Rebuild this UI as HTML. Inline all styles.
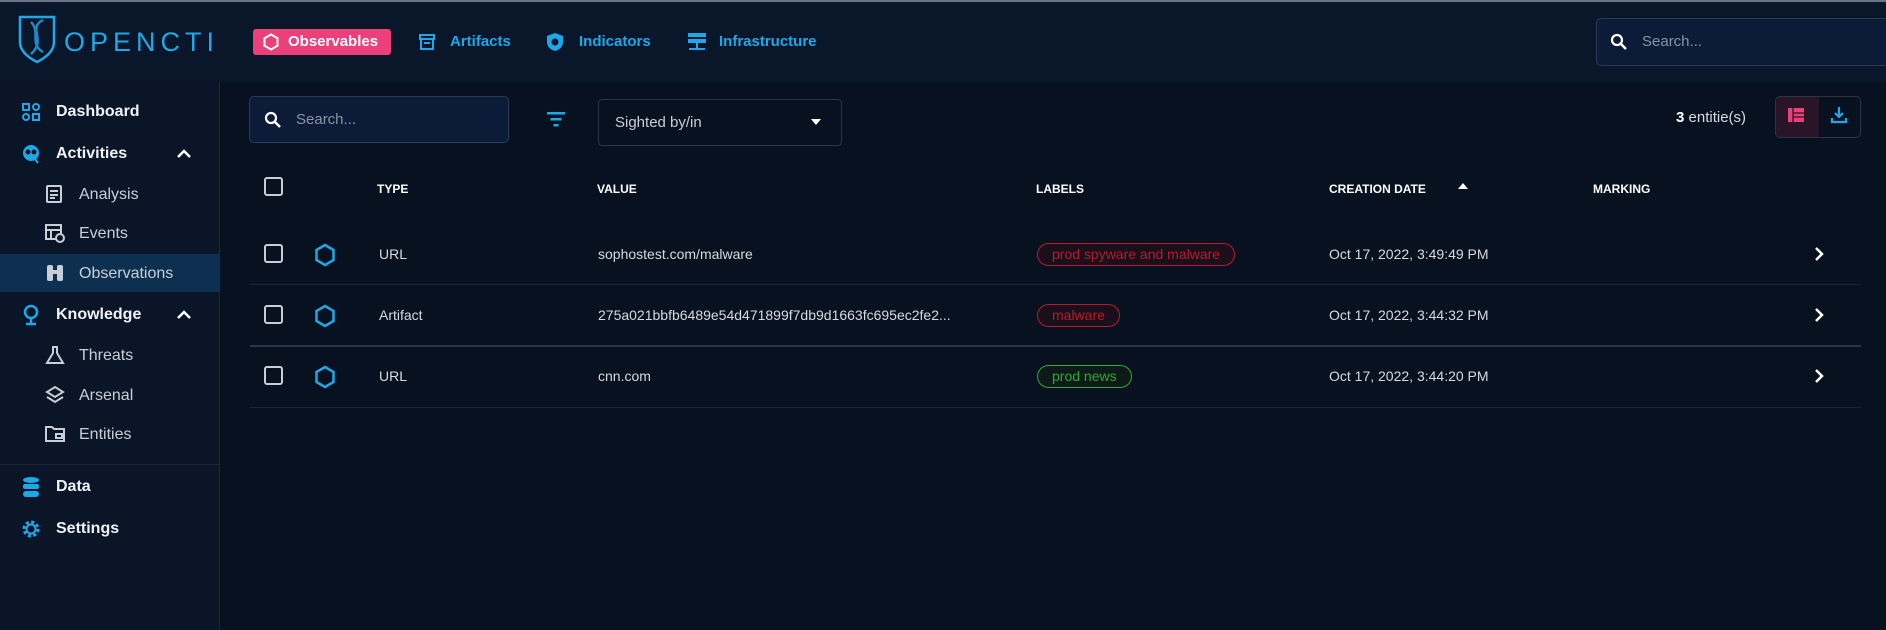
<!DOCTYPE html>
<html><head><meta charset="utf-8"><style>
*{margin:0;padding:0;box-sizing:border-box}
body{width:1886px;height:630px;overflow:hidden;background:#08111f;font-family:"Liberation Sans",sans-serif;color:#fff;position:relative}
.a{position:absolute}
.top{left:0;top:0;width:1886px;height:82px;background:#0a172b;border-top:2px solid #6b7588}
.side{left:0;top:82px;width:220px;height:548px;background:#0a1628;border-right:1px solid #1c2638}
.nav{color:#1ea8e8;font-weight:bold;font-size:15px;top:33px;height:18px;line-height:18px}
.si{left:56px;font-weight:bold;font-size:16px;color:#f0f2f5}
.sub{left:79px;font-size:16px;color:#c9ced6}
.hd{font-size:12px;font-weight:bold;top:182px;color:#fff}
.cb{left:264px;width:19px;height:19px;border:2.5px solid #c9ced6;border-radius:3px}
.cell{font-size:14px;color:#d6dae0}
.sep{left:250px;width:1611px;height:1px;background:#1c2638}
.chip{left:1037px;height:23px;border:1.5px solid;border-radius:12px;font-size:14px;line-height:20px;padding:0 14px}
</style></head><body>
<div class="a top"></div>
<svg class="a" style="left:17px;top:14px" width="40" height="50" viewBox="0 0 40 50"><path d="M3 3 H37 V28 C37 38 28 44 20 48 C12 44 3 38 3 28 Z" fill="none" stroke="#1ea8e8" stroke-width="2.5"/><path d="M26 6 C10 14 30 26 14 40 M14 8 C24 18 12 30 26 38" fill="none" stroke="#1e88c8" stroke-width="2.5"/></svg>
<div class="a" style="left:64px;top:27px;font-size:27px;letter-spacing:5px;color:#1ea8e8">OPENCTI</div>
<div class="a" style="left:253px;top:29px;width:138px;height:26px;background:#ec407a;border-radius:3px"></div>
<svg class="a" style="left:262px;top:33px" width="18" height="18" viewBox="0 0 18 18"><path d="M9 1.5 L15.5 5.2 V12.8 L9 16.5 L2.5 12.8 V5.2 Z" fill="none" stroke="#fff" stroke-width="2"/></svg>
<div class="a nav" style="left:288px;color:#fff;top:33px">Observables</div>
<svg class="a" style="left:418px;top:33px" width="18" height="18" viewBox="0 0 18 18"><rect x="2" y="2" width="14" height="4" fill="none" stroke="#1ea8e8" stroke-width="2"/><rect x="3" y="6" width="12" height="10" fill="none" stroke="#1ea8e8" stroke-width="2"/><rect x="6" y="9" width="6" height="2" fill="#1ea8e8"/></svg>
<div class="a nav" style="left:450px">Artifacts</div>
<svg class="a" style="left:546px;top:32px" width="18" height="20" viewBox="0 0 18 20"><path d="M9 1 L17 4 V10 C17 15 13 18 9 19 C5 18 1 15 1 10 V4 Z" fill="#1ea8e8"/><circle cx="9" cy="10" r="3.5" fill="#0a172b"/></svg>
<div class="a nav" style="left:579px">Indicators</div>
<svg class="a" style="left:687px;top:32px" width="20" height="20" viewBox="0 0 20 20"><rect x="1" y="1" width="18" height="4" fill="#1ea8e8"/><rect x="1" y="7" width="18" height="4" fill="#1ea8e8"/><rect x="9" y="11" width="2" height="5" fill="#1ea8e8"/><rect x="2" y="16" width="16" height="2" fill="#1ea8e8"/></svg>
<div class="a nav" style="left:719px">Infrastructure</div>
<div class="a" style="left:1596px;top:18px;width:300px;height:48px;background:#0c1c38;border:1px solid #2a3a55;border-radius:5px"></div>
<svg class="a" style="left:1610px;top:33px" width="18" height="18" viewBox="0 0 18 18"><circle cx="7" cy="7" r="5" fill="none" stroke="#fff" stroke-width="2.2"/><path d="M11 11 L16 16" stroke="#fff" stroke-width="2.5"/></svg>
<div class="a" style="left:1642px;top:33px;font-size:15px;color:#8a93a3">Search...</div>

<div class="a side"></div>
<div class="a" style="left:0;top:254px;width:220px;height:38px;background:#0d3050"></div>
<div class="a" style="left:0;top:464px;width:220px;height:1px;background:#1c2638"></div>
<svg class="a" style="left:22px;top:103px" width="18" height="18" viewBox="0 0 18 18" fill="none" stroke="#1ea8e8" stroke-width="2"><rect x="1" y="1" width="6" height="6"/><rect x="11" y="1" width="6" height="6" rx="3"/><rect x="1" y="11" width="6" height="6" rx="3"/><rect x="11" y="11" width="6" height="6"/></svg>
<svg class="a" style="left:21px;top:144px" width="20" height="20" viewBox="0 0 20 20"><circle cx="10" cy="9" r="8" fill="#1ea8e8"/><circle cx="7" cy="8" r="2.5" fill="#0a1628"/><circle cx="13" cy="8" r="2.5" fill="#0a1628"/><path d="M14 15 L17 19" stroke="#1ea8e8" stroke-width="2"/></svg>
<svg class="a" style="left:22px;top:304px" width="18" height="22" viewBox="0 0 18 22"><circle cx="9" cy="8" r="6" fill="none" stroke="#1ea8e8" stroke-width="2.5"/><path d="M9 14 V19 M4 20 H14" stroke="#1ea8e8" stroke-width="2.5"/></svg>
<svg class="a" style="left:22px;top:476px" width="18" height="22" viewBox="0 0 18 22"><ellipse cx="9" cy="4" rx="8" ry="3" fill="#1ea8e8"/><rect x="1" y="8" width="16" height="5" rx="2" fill="#1ea8e8"/><rect x="1" y="15" width="16" height="6" rx="3" fill="#1ea8e8"/></svg>
<svg class="a" style="left:21px;top:519px" width="20" height="20" viewBox="0 0 20 20"><circle cx="10" cy="10" r="7" fill="none" stroke="#1ea8e8" stroke-width="3" stroke-dasharray="3 2.5"/><circle cx="10" cy="10" r="4.5" fill="none" stroke="#1ea8e8" stroke-width="2"/></svg>
<div class="a si" style="top:103px">Dashboard</div>
<div class="a si" style="top:145px">Activities</div>
<div class="a si" style="top:306px">Knowledge</div>
<div class="a si" style="top:478px">Data</div>
<div class="a si" style="top:520px">Settings</div>
<svg class="a" style="left:176px;top:149px" width="16" height="10" viewBox="0 0 16 10"><path d="M2 8 L8 2 L14 8" fill="none" stroke="#fff" stroke-width="2.5"/></svg>
<svg class="a" style="left:176px;top:310px" width="16" height="10" viewBox="0 0 16 10"><path d="M2 8 L8 2 L14 8" fill="none" stroke="#fff" stroke-width="2.5"/></svg>
<svg class="a" style="left:45px;top:184px" width="18" height="20" viewBox="0 0 18 20" fill="none" stroke="#c9ced6" stroke-width="2"><rect x="2" y="2" width="14" height="16" rx="1"/><path d="M5 7H13M5 11H13M5 14H10"/></svg>
<svg class="a" style="left:45px;top:223px" width="20" height="20" viewBox="0 0 20 20" fill="none" stroke="#c9ced6" stroke-width="2"><rect x="1" y="2" width="15" height="14"/><path d="M1 7H16M6 7V16"/><circle cx="15" cy="15" r="4" fill="#0a1628"/></svg>
<svg class="a" style="left:45px;top:263px" width="20" height="20" viewBox="0 0 20 20" fill="#c9ced6"><rect x="2" y="2" width="6" height="16" rx="2"/><rect x="12" y="2" width="6" height="16" rx="2"/><rect x="7" y="7" width="6" height="4"/></svg>
<svg class="a" style="left:45px;top:345px" width="20" height="20" viewBox="0 0 20 20" fill="none" stroke="#c9ced6" stroke-width="2"><path d="M7 2H13M8 2V8L2 18H18L12 8V2"/></svg>
<svg class="a" style="left:45px;top:385px" width="20" height="20" viewBox="0 0 20 20" fill="none" stroke="#c9ced6" stroke-width="2"><path d="M10 2L18 7L10 12L2 7Z M2 12L10 17L18 12"/></svg>
<svg class="a" style="left:44px;top:424px" width="22" height="20" viewBox="0 0 22 20" fill="none" stroke="#c9ced6" stroke-width="2"><path d="M2 3H8L10 5H20V17H2Z"/><rect x="12" y="10" width="6" height="4"/></svg>
<div class="a sub" style="top:186px">Analysis</div>
<div class="a sub" style="top:225px">Events</div>
<div class="a sub" style="top:265px">Observations</div>
<div class="a sub" style="top:347px">Threats</div>
<div class="a sub" style="top:387px">Arsenal</div>
<div class="a sub" style="top:426px">Entities</div>

<div class="a" style="left:249px;top:96px;width:260px;height:47px;background:#0c1c38;border:1px solid #2a3a55;border-radius:5px"></div>
<svg class="a" style="left:264px;top:111px" width="18" height="18" viewBox="0 0 18 18"><circle cx="7" cy="7" r="5" fill="none" stroke="#fff" stroke-width="2.2"/><path d="M11 11 L16 16" stroke="#fff" stroke-width="2.5"/></svg>
<div class="a" style="left:296px;top:111px;font-size:15px;color:#8a93a3">Search...</div>
<svg class="a" style="left:546px;top:110px" width="20" height="18" viewBox="0 0 20 18" fill="#1ea8e8"><rect x="1" y="2" width="18" height="2.5"/><rect x="4.5" y="8" width="11" height="2.5"/><rect x="7.5" y="14" width="5" height="2.5"/></svg>
<div class="a" style="left:598px;top:99px;width:244px;height:47px;border:1px solid #2a3445;border-radius:4px"></div>
<div class="a" style="left:615px;top:114px;font-size:15px;color:#c9ced6">Sighted by/in</div>
<svg class="a" style="left:810px;top:118px" width="12" height="8" viewBox="0 0 12 8"><path d="M1 1H11L6 7Z" fill="#fff"/></svg>
<div class="a" style="left:1676px;top:109px;font-size:15px;color:#d6dae0"><b style="color:#fff">3</b> entitie(s)</div>
<div class="a" style="left:1775px;top:96px;width:86px;height:42px;border:1px solid #2a3445;border-radius:5px;overflow:hidden"><div style="width:43px;height:42px;background:#2a1428"></div></div>
<svg class="a" style="left:1787px;top:106px" width="18" height="18" viewBox="0 0 18 18"><rect x="1" y="2" width="16" height="14" fill="#ec407a"/><path d="M6 2V16M6 7H17M6 11H17" stroke="#2a1428" stroke-width="1.3"/></svg>
<svg class="a" style="left:1830px;top:105px" width="18" height="20" viewBox="0 0 18 20" fill="none" stroke="#1ea8e8" stroke-width="2.2"><path d="M9 2V12M5 8L9 12L13 8M2 13V17H16V13"/></svg>

<div class="a cb" style="top:177px"></div>
<div class="a hd" style="left:377px">TYPE</div>
<div class="a hd" style="left:597px">VALUE</div>
<div class="a hd" style="left:1036px">LABELS</div>
<div class="a hd" style="left:1329px">CREATION DATE</div>
<svg class="a" style="left:1457px;top:182px" width="12" height="8" viewBox="0 0 12 8"><path d="M1 7H11L6 1Z" fill="#fff"/></svg>
<div class="a hd" style="left:1593px">MARKING</div>

<div class="a sep" style="top:284px"></div>
<div class="a sep" style="top:345px;height:2px;background:#2a3445"></div>
<div class="a sep" style="top:407px"></div>

<div class="a cb" style="top:244px"></div>
<div class="a cb" style="top:305px"></div>
<div class="a cb" style="top:366px"></div>
<svg class="a" style="left:314px;top:243px" width="22" height="24" viewBox="0 0 22 24"><path d="M11 2 L19.5 7 V17 L11 22 L2.5 17 V7 Z" fill="none" stroke="#1ea8e8" stroke-width="2.5"/></svg>
<svg class="a" style="left:314px;top:304px" width="22" height="24" viewBox="0 0 22 24"><path d="M11 2 L19.5 7 V17 L11 22 L2.5 17 V7 Z" fill="none" stroke="#1ea8e8" stroke-width="2.5"/></svg>
<svg class="a" style="left:314px;top:365px" width="22" height="24" viewBox="0 0 22 24"><path d="M11 2 L19.5 7 V17 L11 22 L2.5 17 V7 Z" fill="none" stroke="#1ea8e8" stroke-width="2.5"/></svg>

<div class="a cell" style="left:379px;top:246px">URL</div>
<div class="a cell" style="left:379px;top:307px">Artifact</div>
<div class="a cell" style="left:379px;top:368px">URL</div>
<div class="a cell" style="left:598px;top:246px">sophostest.com/malware</div>
<div class="a cell" style="left:598px;top:307px">275a021bbfb6489e54d471899f7db9d1663fc695ec2fe2...</div>
<div class="a cell" style="left:598px;top:368px">cnn.com</div>

<div class="a chip" style="top:243px;border-color:#b71c2c;color:#b71c2c;background:#1a0f1a">prod spyware and malware</div>
<div class="a chip" style="top:304px;border-color:#b71c2c;color:#b71c2c;background:#1a0f1a">malware</div>
<div class="a chip" style="top:365px;border-color:#2eaa2e;color:#2eaa2e;background:#0c1a18">prod news</div>

<div class="a cell" style="left:1329px;top:246px">Oct 17, 2022, 3:49:49 PM</div>
<div class="a cell" style="left:1329px;top:307px">Oct 17, 2022, 3:44:32 PM</div>
<div class="a cell" style="left:1329px;top:368px">Oct 17, 2022, 3:44:20 PM</div>
<svg class="a" style="left:1813px;top:246px" width="12" height="16" viewBox="0 0 12 16"><path d="M3 2L9 8L3 14" fill="none" stroke="#fff" stroke-width="2.5"/></svg>
<svg class="a" style="left:1813px;top:307px" width="12" height="16" viewBox="0 0 12 16"><path d="M3 2L9 8L3 14" fill="none" stroke="#fff" stroke-width="2.5"/></svg>
<svg class="a" style="left:1813px;top:368px" width="12" height="16" viewBox="0 0 12 16"><path d="M3 2L9 8L3 14" fill="none" stroke="#fff" stroke-width="2.5"/></svg>
</body></html>
